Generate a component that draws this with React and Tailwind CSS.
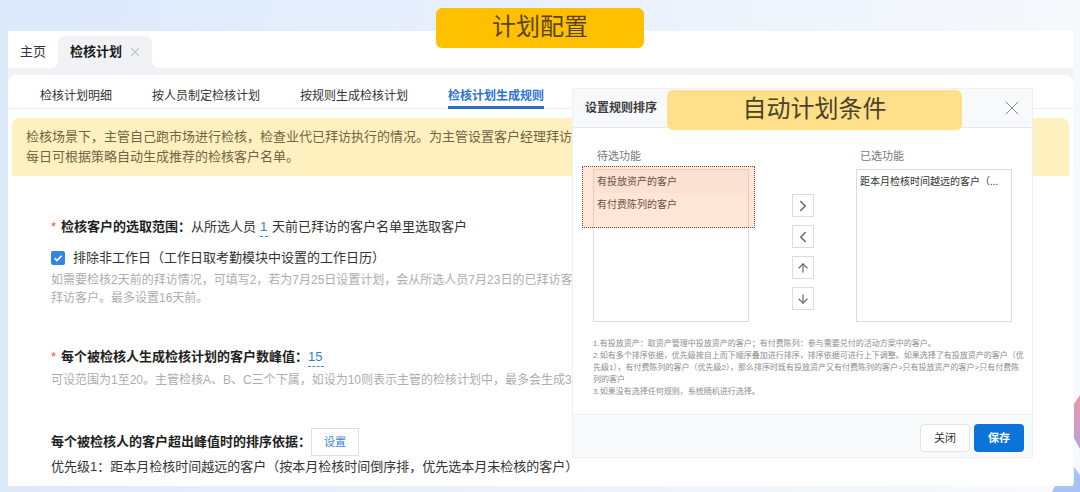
import { useState } from "react";
import {
  FiArrowDown,
  FiArrowUp,
  FiChevronLeft,
  FiChevronRight,
  FiX,
} from "react-icons/fi";

const TABS = [
  "检核计划明细",
  "按人员制定检核计划",
  "按规则生成检核计划",
  "检核计划生成规则",
];

const MOVES = [
  { label: "添加", icon: <FiChevronRight size={18} /> },
  { label: "移除", icon: <FiChevronLeft size={18} /> },
  { label: "上移", icon: <FiArrowUp size={14} /> },
  { label: "下移", icon: <FiArrowDown size={14} /> },
];

export default function App() {
  const [tab, setTab] = useState("检核计划生成规则");

  return (
    <div className="relative min-h-screen overflow-hidden bg-[linear-gradient(100deg,#dbe9fb_0%,#e9f0fd_45%,#f8fafc_100%)] pt-[31px] pr-[7px] pb-[6px] pl-2 font-['Liberation_Sans','Noto_Sans_CJK_SC',sans-serif] text-[13px] leading-5 text-[#333]">
      <Backdrop />

      <main className="relative bg-[#f1f2f6]">
        {/* ------------------- PAGE TABS ------------------- */}
        <nav className="flex h-[37px] items-end bg-white pl-3">
          <a href="#home" className="pb-[6px]">
            主页
          </a>
          <div className="relative ml-3 flex h-8 items-center gap-1.5 rounded-t-lg bg-[#f1f2f6] pr-2.5 pl-3 before:absolute before:bottom-0 before:-left-2 before:size-2 before:bg-[radial-gradient(circle_at_0_0,transparent_8px,#f1f2f6_8px)] after:absolute after:-right-2 after:bottom-0 after:size-2 after:bg-[radial-gradient(circle_at_100%_0,transparent_8px,#f1f2f6_8px)]">
            <a href="#plan" className="font-bold text-[#1a1a1a]">
              检核计划
            </a>
            <button aria-label="关闭标签" className="text-[#c4c6cc]">
              <FiX size={14} strokeWidth={2} />
            </button>
          </div>
        </nav>

        <section className="mt-[7px] rounded-t-lg bg-white pb-[9px]">
          {/* ------------------- SUB TABS ------------------- */}
          <div className="flex h-[34px] items-end gap-10 border-b border-[#eceef1] pl-8 text-xs">
            {TABS.map((t) => (
              <button
                key={t}
                onClick={() => setTab(t)}
                className={
                  t === tab
                    ? "-mb-px h-8 border-b-3 border-[#2f6fc9] pt-2 font-bold whitespace-nowrap text-[#2f74d0]"
                    : "-mb-px h-8 border-b-3 border-transparent pt-2 whitespace-nowrap"
                }
              >
                {t}
              </button>
            ))}
          </div>

          {/* ------------------- NOTICE ------------------- */}
          <div className="mx-1 mt-[9px] overflow-hidden rounded-t-lg bg-[#fff1bf] py-[9px] pl-[14px] whitespace-nowrap text-[#6e6541]">
            <p>
              检核场景下，主管自己跑市场进行检核，检查业代已拜访执行的情况。为主管设置客户经理拜访执
            </p>
            <p>每日可根据策略自动生成推荐的检核客户名单。</p>
          </div>

          {/* ------------------- RULES ------------------- */}
          <div className="pt-[41px] pl-[43px] whitespace-nowrap">
            <div className="flex h-5">
              <Required />
              <label htmlFor="days" className="font-bold text-[#1f1f1f]">
                检核客户的选取范围：
              </label>
              <span>从所选人员</span>
              <input
                id="days"
                defaultValue="1"
                className="mx-1 w-2 border-b border-dashed border-[#3f8fd2] text-[#2f80cc] outline-none"
              />
              <span>天前已拜访的客户名单里选取客户</span>
            </div>

            <label className="mt-[11px] flex h-5 items-center gap-2">
              <span className="grid size-[14px] place-items-center">
                <input
                  type="checkbox"
                  defaultChecked
                  className="col-start-1 row-start-1 size-[14px] appearance-none rounded-xs bg-[#3385e6]"
                />
                <svg
                  viewBox="0 0 14 14"
                  className="pointer-events-none col-start-1 row-start-1 size-[14px]"
                >
                  <path
                    d="M3.6 7.1l2.4 2.4 4.6-4.8"
                    fill="none"
                    stroke="#fff"
                    strokeWidth="1.6"
                  />
                </svg>
              </span>
              排除非工作日（工作日取考勤模块中设置的工作日历）
            </label>
            <p className="mt-[3px] text-xs leading-[18px] text-[#adadad]">
              如需要检核2天前的拜访情况，可填写2，若为7月25日设置计划，会从所选人员7月23日的已拜访客户
              <br />
              拜访客户。最多设置16天前。
            </p>

            <div className="mt-10 flex h-5">
              <Required />
              <label htmlFor="peak" className="font-bold text-[#1f1f1f]">
                每个被检核人生成检核计划的客户数峰值：
              </label>
              <input
                id="peak"
                defaultValue="15"
                className="w-4 border-b border-dashed border-[#3f8fd2] text-[#2f80cc] outline-none"
              />
            </div>
            <p className="mt-1 text-xs leading-[18px] text-[#adadad]">
              可设范围为1至20。主管检核A、B、C三个下属，如设为10则表示主管的检核计划中，最多会生成30个
            </p>

            <div className="mt-[39px] flex h-7 items-center">
              <b className="text-[#1f1f1f]">
                每个被检核人的客户超出峰值时的排序依据：
              </b>
              <button className="h-7 w-12 border border-[#dcdfe4] bg-white text-[11px] text-[#3b86dc]">
                设置
              </button>
            </div>
            <p className="mt-px">
              优先级1：距本月检核时间越远的客户（按本月检核时间倒序排，优先选本月未检核的客户）
            </p>
          </div>
        </section>
      </main>

      <SortDialog />

      {/* Page heading */}
      <h1 className="absolute top-2 left-1/2 h-10 w-[208px] -translate-x-1/2 rounded-md bg-[#ffc000] text-center text-2xl leading-[38px] text-[#5a4505]">
        计划配置
      </h1>
    </div>
  );
}

function SortDialog() {
  return (
    <div
      role="dialog"
      aria-labelledby="sort-title"
      className="absolute top-[88px] right-[47px] w-[461px] border border-[#eef0f2] bg-white"
    >
      <header className="flex h-[39px] items-center justify-between border-b border-[#e6e8eb] bg-[#f8f9fb] pr-2 pl-3">
        <h2 id="sort-title" className="text-xs font-bold text-[#3c3c3c]">
          设置规则排序
        </h2>
        <button aria-label="关闭窗口" className="text-[#8a8a8a]">
          <FiX size={24} strokeWidth={1} />
        </button>
      </header>

      <div className="flex justify-between pt-[18px] pr-5 pl-5">
        <OptionList
          title="待选功能"
          items={["有投放资产的客户", "有付费陈列的客户"]}
          active="有投放资产的客户"
          marked
        />
        <div className="flex flex-col gap-2 pt-12">
          {MOVES.map((m) => (
            <button
              key={m.label}
              aria-label={m.label}
              className="flex h-[23px] w-[22px] items-center justify-center border border-[#dcdcdc] text-[#666]"
            >
              {m.icon}
            </button>
          ))}
        </div>
        <OptionList title="已选功能" items={["距本月检核时间越远的客户（..."]} />
      </div>

      <p className="pt-4 pb-4 pl-5 text-[8px] leading-3 whitespace-nowrap text-[#8c8c8c]">
        1.有投放资产：取资产管理中投放资产的客户；有付费陈列：参与需要兑付的活动方案中的客户。
        <br />
        2.如有多个排序依据，优先级按自上而下顺序叠加进行排序，排序依据可进行上下调整。如果选择了有投放资产的客户（优
        <br />
        先级1），有付费陈列的客户（优先级2），那么排序时既有投放资产又有付费陈列的客户&gt;只有投放资产的客户&gt;只有付费陈
        <br />
        列的客户
        <br />
        3.如果没有选择任何规则，系统随机进行选择。
      </p>

      <footer className="flex justify-end gap-1 border-t border-[#eceef0] bg-[#f8f9fb] pt-[9px] pr-2 pb-[5px] text-[11px]">
        <button className="h-7 w-[50px] rounded-sm border border-[#e2e4e8] bg-white">
          关闭
        </button>
        <button className="h-7 w-[50px] rounded-sm bg-[#0b74da] font-bold text-white">
          保存
        </button>
      </footer>

      {/* Callout over the dialog header */}
      <div className="absolute top-px left-[94px] h-10 w-[295px] rounded-md bg-[#fee08a] text-center text-2xl leading-[38px] text-[#4a4326]">
        自动计划条件
      </div>
    </div>
  );
}

/* LIST WITH OPTIONAL HIGHLIGHT FRAME */
function OptionList({ title, items, active, marked }) {
  return (
    <div className="relative w-[156px]">
      <h3 className="pl-1 text-[11px] text-[#777]">{title}</h3>
      <ul
        role="listbox"
        aria-label={title}
        className="mt-[3px] h-[153px] border border-[#dcdcdc] text-[10px] leading-[23px] whitespace-nowrap"
      >
        {items.map((item) => (
          <li
            key={item}
            role="option"
            aria-selected={item === active}
            className="pl-[3px] aria-selected:bg-[#f8f8f8]"
          >
            {item}
          </li>
        ))}
      </ul>
      {marked && (
        <div className="pointer-events-none absolute top-5 -left-[11px] h-[62px] w-[173px] border border-dotted border-[#7a4a38] bg-[#ff9a5c]/25" />
      )}
    </div>
  );
}

function Required() {
  return <span className="w-[10px] text-[#e8564f]">*</span>;
}

/* Coloured shapes in the lower right corner */
function Backdrop() {
  return (
    <svg
      viewBox="0 0 30 100"
      className="absolute right-0 bottom-0 h-[100px] w-[30px]"
      aria-hidden="true"
    >
      <defs>
        <linearGradient id="pink" x1="0" y1="0" x2="0" y2="1">
          <stop offset="0" stopColor="#e898a8" />
          <stop offset="1" stopColor="#b9a0e0" />
        </linearGradient>
      </defs>
      <path d="M30 3L24 12V46L30 57z" fill="url(#pink)" />
      <path d="M24 75L30 83V100H2L6 92H24z" fill="#a5c3f5" />
    </svg>
  );
}
